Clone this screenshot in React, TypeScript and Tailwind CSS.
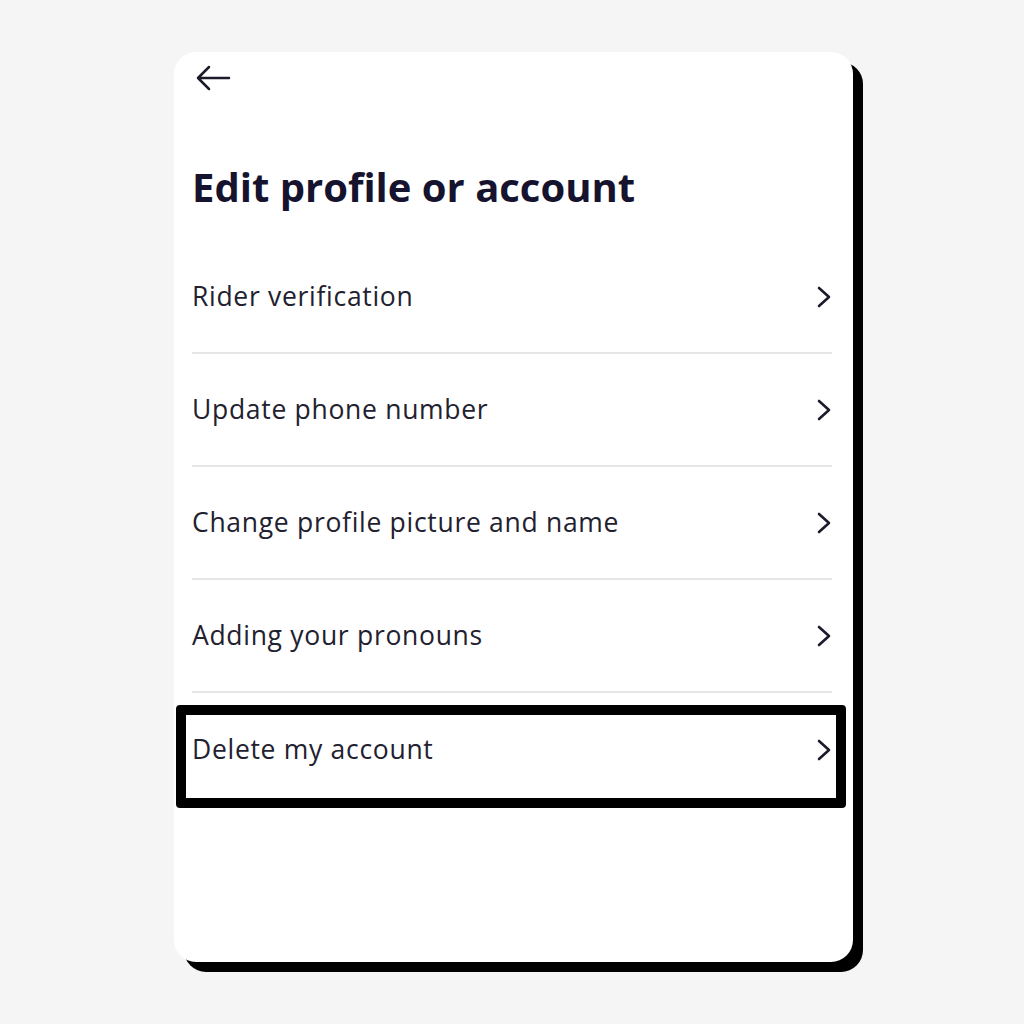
import React from "react";

const items = [
  "Rider verification",
  "Update phone number",
  "Change profile picture and name",
  "Adding your pronouns",
];

function Chevron() {
  return (
    <svg width="16" height="24" viewBox="0 0 16 24" fill="none" className="shrink-0">
      <polyline
        points="3,3 13,12 3,21"
        stroke="#1c1b2b"
        strokeWidth="2.6"
        strokeLinecap="round"
        strokeLinejoin="round"
      />
    </svg>
  );
}

export default function App() {
  return (
    <div className="min-h-screen bg-[#f5f5f5] pt-[52px] pl-[174px]" style={{ fontFamily: "'Open Sans', sans-serif" }}>
      <div className="w-[679px] h-[910px] rounded-[22px] bg-white shadow-[10px_10px_0_#000] pl-[18px] pr-[21px]">
        <div className="pt-[26px] pl-[3px] h-[60px]">
          <svg width="36" height="26" viewBox="0 0 36 26" fill="none" className="-mt-[13px]">
            <path d="M34 13H3M14 2L3 13l11 11" stroke="#1c1b2b" strokeWidth="2.5" strokeLinecap="round" strokeLinejoin="round" />
          </svg>
        </div>
        <h1 className="text-[40px] leading-[50px] font-bold text-[#16132f] pt-[50px] h-[129px]">
          Edit profile or account
        </h1>
        <div>
          {items.map((label) => (
            <div key={label} className="h-[113px] flex items-center justify-between border-b-2 border-[#e6e6e6]">
              <span className="text-[26.5px] tracking-[0.7px] text-[#22212f]">{label}</span>
              <Chevron />
            </div>
          ))}
          <div className="relative h-[113px] flex items-center justify-between">
            <span className="text-[26.5px] tracking-[0.7px] text-[#22212f]">Delete my account</span>
            <Chevron />
            <div className="absolute -left-[16px] -right-[14px] top-[12px] -bottom-[2px] border-[10px] border-black rounded-[4px]" />
          </div>
        </div>
      </div>
    </div>
  );
}
